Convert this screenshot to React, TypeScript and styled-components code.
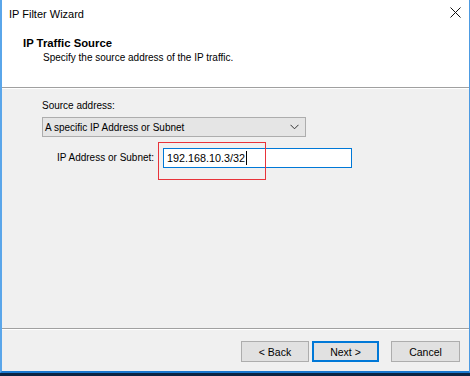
import React from "react";
import styled, { createGlobalStyle } from "styled-components";

const Global = createGlobalStyle`
  html, body { margin: 0; padding: 0; }
  body { width: 470px; height: 376px; overflow: hidden; background: #0b2442; font-family: "Liberation Sans", Arial, sans-serif; font-size: 10px; color: #000; }
`;

const Screen = styled.div`
  width: 470px;
  height: 376px;
  display: flex;
  flex-direction: column;
  background: #0b2442;
`;

const Window = styled.div`
  box-sizing: border-box;
  width: 470px;
  height: 373px;
  display: flex;
  flex-direction: column;
  border-left: 2px solid #5aa6ea;
  border-right: 1px solid #4d9be2;
  border-bottom: 2px solid #1b79d0;
  background: #f0f0f0;
`;

const Top = styled.div`
  background: #fff;
  height: 88px;
  box-sizing: border-box;
  border-bottom: 1px solid #a0a0a0;
  display: flex;
  flex-direction: column;
`;

const TitleBar = styled.div`
  height: 28px;
  display: flex;
  align-items: center;
  justify-content: space-between;
  padding: 0 8px 0 7px;
`;

const Title = styled.span`
  font-size: 11px;
  color: #000;
  margin-top: -1px;
`;

const Close = styled.svg`
  width: 11px;
  height: 11px;
  margin-top: -4px;
`;

const Header = styled.div`
  padding: 8px 0 0 21px;
  display: flex;
  flex-direction: column;
`;

const Heading = styled.div`
  font-weight: bold;
  font-size: 11.3px;
  line-height: 14px;
`;

const Sub = styled.div`
  padding-left: 20px;
  line-height: 13px;
  margin-top: 1px;
  font-size: 10px;
`;

const Body = styled.div`
  flex: 1;
  border-top: 1px solid #fff;
  border-bottom: 1px solid #a0a0a0;
  padding: 10px 0 0 40px;
  display: flex;
  flex-direction: column;
  position: relative;
`;

const Label = styled.div<{ $w?: number }>`
  line-height: 14px;
  font-size: 10px;
  ${(p) => (p.$w ? `width: ${p.$w}px;` : "")}
`;

const Combo = styled.div`
  margin-top: 4px;
  box-sizing: border-box;
  width: 264px;
  height: 20px;
  background: #e5e5e5;
  border: 1px solid #adadad;
  display: flex;
  align-items: center;
  justify-content: space-between;
  padding: 0 6px 0 2px;
`;

const Row = styled.div`
  margin-top: 11px;
  display: flex;
  align-items: center;
  padding-left: 15px;
`;

const Input = styled.div`
  box-sizing: border-box;
  width: 189px;
  height: 20px;
  border: 1px solid #0078d7;
  background: #fff;
  display: flex;
  align-items: center;
  padding-left: 3px;
  font-size: 10.8px;
`;

const Caret = styled.span`
  display: inline-block;
  width: 1px;
  height: 14px;
  background: #000;
  margin-left: 1px;
`;

const Highlight = styled.div`
  position: absolute;
  left: 156px;
  top: 53px;
  width: 108px;
  height: 38px;
  box-sizing: border-box;
  border: 1.5px solid #e8333a;
`;

const Footer = styled.div`
  height: 42px;
  box-sizing: border-box;
  border-top: 1px solid #fff;
  display: flex;
  justify-content: flex-end;
  align-items: flex-start;
  padding: 11px 9px 0 0;
`;

const Button = styled.div<{ $primary?: boolean; $gap?: number; $w: number }>`
  box-sizing: border-box;
  width: ${(p) => p.$w}px;
  height: 21px;
  margin-left: ${(p) => p.$gap ?? 0}px;
  background: #e1e1e1;
  border: 1px solid ${(p) => (p.$primary ? "#0078d7" : "#adadad")};
  box-shadow: ${(p) => (p.$primary ? "inset 0 0 0 1px #0078d7" : "none")};
  display: flex;
  align-items: center;
  justify-content: center;
  font-size: 10.5px;
`;

export default function App() {
  return (
    <>
      <Global />
      <Screen>
        <Window>
          <Top>
            <TitleBar>
              <Title>IP Filter Wizard</Title>
              <Close viewBox="0 0 11 11">
                <path d="M0.5 0.5L10.5 10.5M10.5 0.5L0.5 10.5" stroke="#111" strokeWidth="1" fill="none" />
              </Close>
            </TitleBar>
            <Header>
              <Heading>IP Traffic Source</Heading>
              <Sub>Specify the source address of the IP traffic.</Sub>
            </Header>
          </Top>
          <Body>
            <Label>Source address:</Label>
            <Combo>
              <span>A specific IP Address or Subnet</span>
              <svg width="9" height="6" viewBox="0 0 9 6">
                <path d="M0.5 0.8L4.5 4.8L8.5 0.8" stroke="#333" strokeWidth="1" fill="none" />
              </svg>
            </Combo>
            <Row>
              <Label $w={106}>IP Address or Subnet:</Label>
              <Input>
                192.168.10.3/32
                <Caret />
              </Input>
            </Row>
            <Highlight />
          </Body>
          <Footer>
            <Button $w={68}>&lt; Back</Button>
            <Button $w={67} $gap={3} $primary>Next &gt;</Button>
            <Button $w={69} $gap={12}>Cancel</Button>
          </Footer>
        </Window>
      </Screen>
    </>
  );
}
